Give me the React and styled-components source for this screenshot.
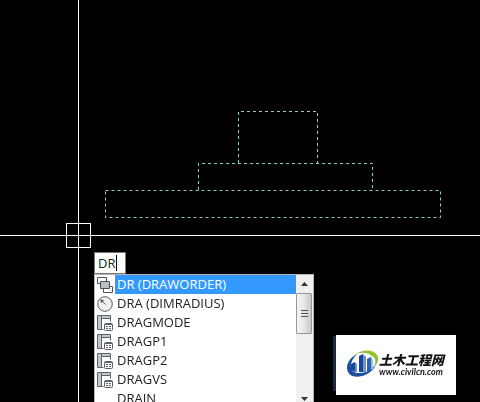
import React, { useState } from "react";
import styled, { createGlobalStyle } from "styled-components";

const GlobalStyle = createGlobalStyle`
  body {
    margin: 0;
    background-color: #000;
  }
`;

const Canvas = styled.main`
  position: relative;
  min-height: 100vh;
  overflow: hidden;
  background-color: #000;
  font-family: "Open Sans", "Noto Sans", sans-serif;
`;

const CrosshairLine = styled.div`
  position: absolute;
  background-color: #fff;

  &.vertical {
    left: 78px;
    top: 0;
    bottom: 0;
    width: 1px;
  }

  &.horizontal {
    left: 0;
    right: 0;
    top: 235px;
    height: 1px;
  }
`;

const PickBox = styled.div`
  position: absolute;
  left: 66px;
  top: 223px;
  width: 25px;
  height: 25px;
  box-sizing: border-box;
  border: 1px solid #fff;
`;

const Drawing = styled.svg`
  position: absolute;
  left: 105px;
  top: 111px;
  fill: none;
  stroke: #8fd0bc;
  stroke-dasharray: 3 3;
`;

const CommandPopup = styled.div`
  position: absolute;
  left: 94px;
  top: 252px;
  width: 220px;
  height: 150px;
  overflow: hidden;
`;

const CommandField = styled.div`
  display: flex;
  align-items: center;
  width: 32px;
  height: 22px;
  box-sizing: border-box;
  padding-left: 3px;
  border: 1px solid #777;
  background-color: #fff;
`;

const CommandInput = styled.input`
  width: 18px;
  height: 20px;
  padding: 0;
  border: 0;
  outline: none;
  background: none;
  color: #222;
  caret-color: transparent;
  font-family: inherit;
  font-size: 13px;
`;

const Caret = styled.span`
  width: 1px;
  height: 16px;
  background-color: #000;
`;

const SuggestionBox = styled.div`
  display: flex;
  border: 1px solid #b4b4b4;
  background-color: #fff;
`;

const SuggestionList = styled.ul`
  flex: 1;
  margin: 0;
  padding: 0;
  list-style: none;
`;

const Suggestion = styled.button`
  display: flex;
  width: 100%;
  height: 19px;
  padding: 0;
  border: 0;
  background: none;
  font-family: inherit;
  font-size: 13px;
  line-height: 19px;
  text-align: left;
`;

const IconCell = styled.span`
  display: flex;
  align-items: center;
  justify-content: center;
  width: 20px;
  height: 19px;
`;

const SuggestionText = styled.span`
  flex: 1;
  padding-left: 2px;
  background-color: ${(props) => (props.$active ? "#3399ff" : "transparent")};
  color: ${(props) => (props.$active ? "#fff" : "#222")};
`;

const ScrollBar = styled.div`
  display: flex;
  flex-direction: column;
  width: 17px;
  background-color: #f0f0f0;
`;

const ScrollButton = styled.button`
  display: flex;
  align-items: center;
  justify-content: center;
  height: 18px;
  padding: 0;
  border: 0;
  background: none;
`;

const ScrollThumb = styled.div`
  display: flex;
  flex-direction: column;
  align-items: center;
  justify-content: center;
  gap: 2px;
  height: 41px;
  margin-right: 1px;
  box-sizing: border-box;
  border: 1px solid #979797;
  border-radius: 1px;
  background: linear-gradient(to right, #f5f5f5, #e6e6e6 50%, #c6c8ca);
`;

const Grip = styled.span`
  width: 7px;
  height: 1px;
  background-color: #555;
`;

const ScrollTrack = styled.div`
  flex: 1;
`;

const Watermark = styled.a`
  position: absolute;
  right: 24px;
  bottom: 7px;
  display: flex;
  align-items: center;
  width: 120px;
  height: 60px;
  box-sizing: border-box;
  padding: 0 0 2px 11px;
  background-color: #fff;
  color: #111;
  text-decoration: none;

  &::before {
    content: "";
    position: absolute;
    left: -3px;
    top: 1px;
    width: 3px;
    height: 55px;
    background-color: #1b2749;
  }
`;

const WatermarkText = styled.span`
  display: flex;
  flex-direction: column;
  font-style: italic;
  white-space: nowrap;
`;

const SiteName = styled.span`
  font-family: "Noto Sans CJK SC", sans-serif;
  font-size: 13px;
  font-weight: 900;
  line-height: 15px;
`;

const SiteUrl = styled.span`
  font-family: Lato, sans-serif;
  font-size: 9px;
  font-weight: 700;
  line-height: 10px;
`;

function OrderIcon() {
  return (
    <svg width="16" height="16" viewBox="0 0 16 16" fill="#fff" stroke="#4b5258">
      <path d="M0.5 0.5h9v6h-9zM6.5 9.5h9v6h-9z" />
      <path d="M3.5 4.5h9v7h-9z" fill="#b9bec3" />
    </svg>
  );
}

function RadiusIcon() {
  return (
    <svg width="16" height="16" viewBox="0 0 16 16" fill="none" stroke="#565b60">
      <circle cx="8" cy="8" r="7.300" fill="#f0f0f0" />
      <path d="M8.500 8.500L4 4" />
      <path d="M3.200 3.200l4 1-3 3z" fill="#565b60" stroke="none" />
    </svg>
  );
}

function VariableIcon() {
  return (
    <svg width="16" height="16" viewBox="0 0 16 16" fill="none" stroke="#596067">
      <path d="M0.500 0.500h13v3h-9v11h-4z" fill="#c3c7cb" />
      <path d="M4.500 3.500v-3M13.500 3.500v3M4.500 14.500h2" />
      <rect x="7.500" y="8.500" width="8" height="7" rx="1" fill="#fff" />
      <path d="M8 9.500h7" />
      <path d="M9 11.500h2M12 11.500h2M9 13.500h2M12 13.500h2" />
    </svg>
  );
}

function LogoMark() {
  return (
    <svg width="32" height="28" viewBox="0 0 32 28">
      <path
        d="M10 4C2 8-2 16 1 22c3 6 12 6 19 2 4-2 7-5 9-9-5 5-10 8-16 8C3 24 0 14 10 4z"
        fill="#1d4f9e"
      />
      <path
        d="M7 5C14 0 23-1 28 3c5 4 4 9-1 14 2-5 2-9-2-11C20 2 13 2 7 5z"
        fill="#8fc52c"
      />
      <path d="M4 14l4-2v10l-4-2zM12 6l4-2v18h-4z" fill="#174796" />
      <path d="M8 12l2 2v8H8zM16 4l3 3v15h-3z" fill="#6793d0" />
      <path d="M20 9l4-2v13l-4 2z" fill="#2861af" />
      <path d="M24 7l2 3v9l-2 1z" fill="#9bbce6" />
    </svg>
  );
}

const suggestions = [
  { text: "DR (DRAWORDER)", icon: OrderIcon },
  { text: "DRA (DIMRADIUS)", icon: RadiusIcon },
  { text: "DRAGMODE", icon: VariableIcon },
  { text: "DRAGP1", icon: VariableIcon },
  { text: "DRAGP2", icon: VariableIcon },
  { text: "DRAGVS", icon: VariableIcon },
  { text: "DRAIN" },
];

function App() {
  const [command, setCommand] = useState("DR");
  const [active, setActive] = useState(0);

  return (
    <Canvas>
      <GlobalStyle />
      <Drawing width="336" height="107" viewBox="0 0 336 107">
        <path d="M133.500 52V0.500H212.500V52" />
        <path d="M93.500 79V52.500H267.500V79" />
        <path d="M0.500 79.500H335.500V106.500H0.500z" />
      </Drawing>
      <CrosshairLine className="vertical" />
      <CrosshairLine className="horizontal" />
      <PickBox />
      <CommandPopup>
        <CommandField>
          <CommandInput
            aria-label="Command"
            autoFocus
            value={command}
            onChange={(e) => setCommand(e.target.value)}
          />
          <Caret />
        </CommandField>
        <SuggestionBox>
          <SuggestionList>
            {suggestions.map(({ text, icon: Icon }, index) => (
              <li key={text}>
                <Suggestion type="button" onClick={() => setActive(index)}>
                  <IconCell>{Icon && <Icon />}</IconCell>
                  <SuggestionText $active={index === active}>{text}</SuggestionText>
                </Suggestion>
              </li>
            ))}
          </SuggestionList>
          <ScrollBar>
            <ScrollButton type="button" aria-label="Scroll up">
              <svg width="7" height="4" viewBox="0 0 7 4">
                <path d="M0 4L3.500 0L7 4z" fill="#333" />
              </svg>
            </ScrollButton>
            <ScrollThumb>
              <Grip />
              <Grip />
              <Grip />
            </ScrollThumb>
            <ScrollTrack />
            <ScrollButton type="button" aria-label="Scroll down">
              <svg width="7" height="4" viewBox="0 0 7 4">
                <path d="M0 0L3.500 4L7 0z" fill="#333" />
              </svg>
            </ScrollButton>
          </ScrollBar>
        </SuggestionBox>
      </CommandPopup>
      <Watermark href="http://www.civilcn.com">
        <LogoMark />
        <WatermarkText>
          <SiteName lang="zh-CN">土木工程网</SiteName>
          <SiteUrl>www.civilcn.com</SiteUrl>
        </WatermarkText>
      </Watermark>
    </Canvas>
  );
}

export default App;
